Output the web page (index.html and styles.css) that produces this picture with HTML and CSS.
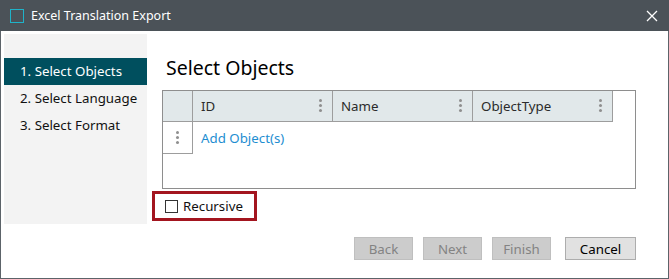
FILE: index.html
```html
<!DOCTYPE html>
<html>
<head>
<meta charset="utf-8">
<link rel="stylesheet" href="styles.css">
</head>
<body>
<div class="window">
  <div class="titlebar">
    <span class="app-icon"></span>
    <span class="title">Excel Translation Export</span>
    <svg class="close" width="12" height="12" viewBox="0 0 12 12"><path d="M1 1L11 11M11 1L1 11" stroke="#fff" stroke-width="1.3"/></svg>
  </div>
  <div class="content">
    <div class="body">
      <div class="sidebar">
        <div class="step active">1. Select Objects</div>
        <div class="step">2. Select Language</div>
        <div class="step">3. Select Format</div>
      </div>
      <div class="main">
        <h1 class="heading">Select Objects</h1>
        <div class="table">
          <div class="thead">
            <div class="cell rowhead"></div>
            <div class="cell col">ID<span class="kebab"></span></div>
            <div class="cell col">Name<span class="kebab"></span></div>
            <div class="cell col">ObjectType<span class="kebab"></span></div>
          </div>
          <div class="trow">
            <div class="cell rowhead body-rowhead"><span class="kebab"></span></div>
            <div class="cell link">Add Object(s)</div>
          </div>
        </div>
        <div class="recursive">
          <span class="checkbox"></span>
          <span class="label">Recursive</span>
        </div>
      </div>
    </div>
    <div class="footer">
      <button class="btn disabled">Back</button>
      <button class="btn disabled">Next</button>
      <button class="btn disabled">Finish</button>
      <button class="btn cancel">Cancel</button>
    </div>
  </div>
</div>
</body>
</html>
```

FILE: styles.css
```css
* { box-sizing: border-box; }
html, body { margin: 0; padding: 0; background: #fff; }
body { font-family: "Noto Sans", "Open Sans", sans-serif; color: #1a1a1a; }

.window { width: 669px; height: 279px; display: flex; flex-direction: column; }

.titlebar {
  height: 31px;
  background: #4b5258;
  display: flex;
  align-items: center;
  padding-left: 10px;
  padding-right: 11px;
  flex: none;
}
.app-icon {
  width: 14px; height: 14px;
  border: 1.5px solid #1fb3c9;
  margin-right: 7px;
}
.title { color: #fff; font-size: 12.5px; flex: 1; }
.close { display: block; }

.content {
  flex: 1;
  border: 1px solid #5c6369;
  border-top: none;
  display: flex;
  flex-direction: column;
  padding: 3px 0 0 3px;
}
.body { display: flex; height: 190px; }

.sidebar {
  width: 143px;
  background: #f3f3f3;
  padding-top: 24px;
}
.step {
  height: 27px;
  line-height: 27px;
  padding-left: 16px;
  font-size: 13.3px;
  color: #111;
}
.step.active { background: #004f5e; color: #fff; }

.main { padding-left: 5px; flex: 1; }
.heading {
  margin: 19px 0 0 14px;
  font-size: 19.5px;
  font-weight: normal;
  line-height: 30px;
  height: 37px;
  color: #000;
}
.table {
  margin-left: 10px;
  width: 474px;
  height: 99px;
  border: 1px solid #8e8e8e;
}
.thead { display: flex; height: 31px; }
.thead .cell {
  background: #e1e8ea;
  border-right: 1px solid #9d9d9d;
  border-bottom: 1px solid #9d9d9d;
}
.cell {
  display: flex;
  align-items: center;
  font-size: 13.3px;
  position: relative;
}
.rowhead { width: 30px; flex: none; justify-content: center; }
.col { width: 140px; padding-left: 8px; color: #2b2b2b; }
.col .kebab { position: absolute; right: 10px; top: 8px; }
.trow { display: flex; height: 32px; }
.body-rowhead { border-right: 1px solid #9d9d9d; border-bottom: 1px solid #9d9d9d; }
.link { color: #1e8ed1; padding-left: 8px; }
.kebab {
  width: 3px; height: 3px; border-radius: 50%;
  background: #8f8f8f;
  box-shadow: 0 5px 0 #8f8f8f, 0 10px 0 #8f8f8f;
  display: block;
}
.body-rowhead .kebab { margin-top: -10px; }

.recursive {
  margin-top: 2px;
  width: 105px;
  height: 30px;
  border: 3px solid #a3151f;
  display: flex;
  align-items: center;
  padding-left: 10px;
}
.checkbox {
  width: 13px; height: 13px;
  border: 1px solid #333;
  margin-right: 5px;
  background: #fff;
}
.label { font-size: 13.3px; color: #111; }

.footer {
  display: flex;
  justify-content: flex-end;
  gap: 10px;
  padding: 13px 32px 0 0;
}
.btn {
  height: 23px;
  width: 59px;
  font-family: inherit;
  font-size: 13.3px;
  padding: 0;
  border: 1px solid #bfbfbf;
  background: #cccccc;
  color: #838383;
}
.btn.cancel {
  width: 71px;
  margin-left: 4px;
  background: #e1e1e1;
  border-color: #adadad;
  color: #000;
}
```
